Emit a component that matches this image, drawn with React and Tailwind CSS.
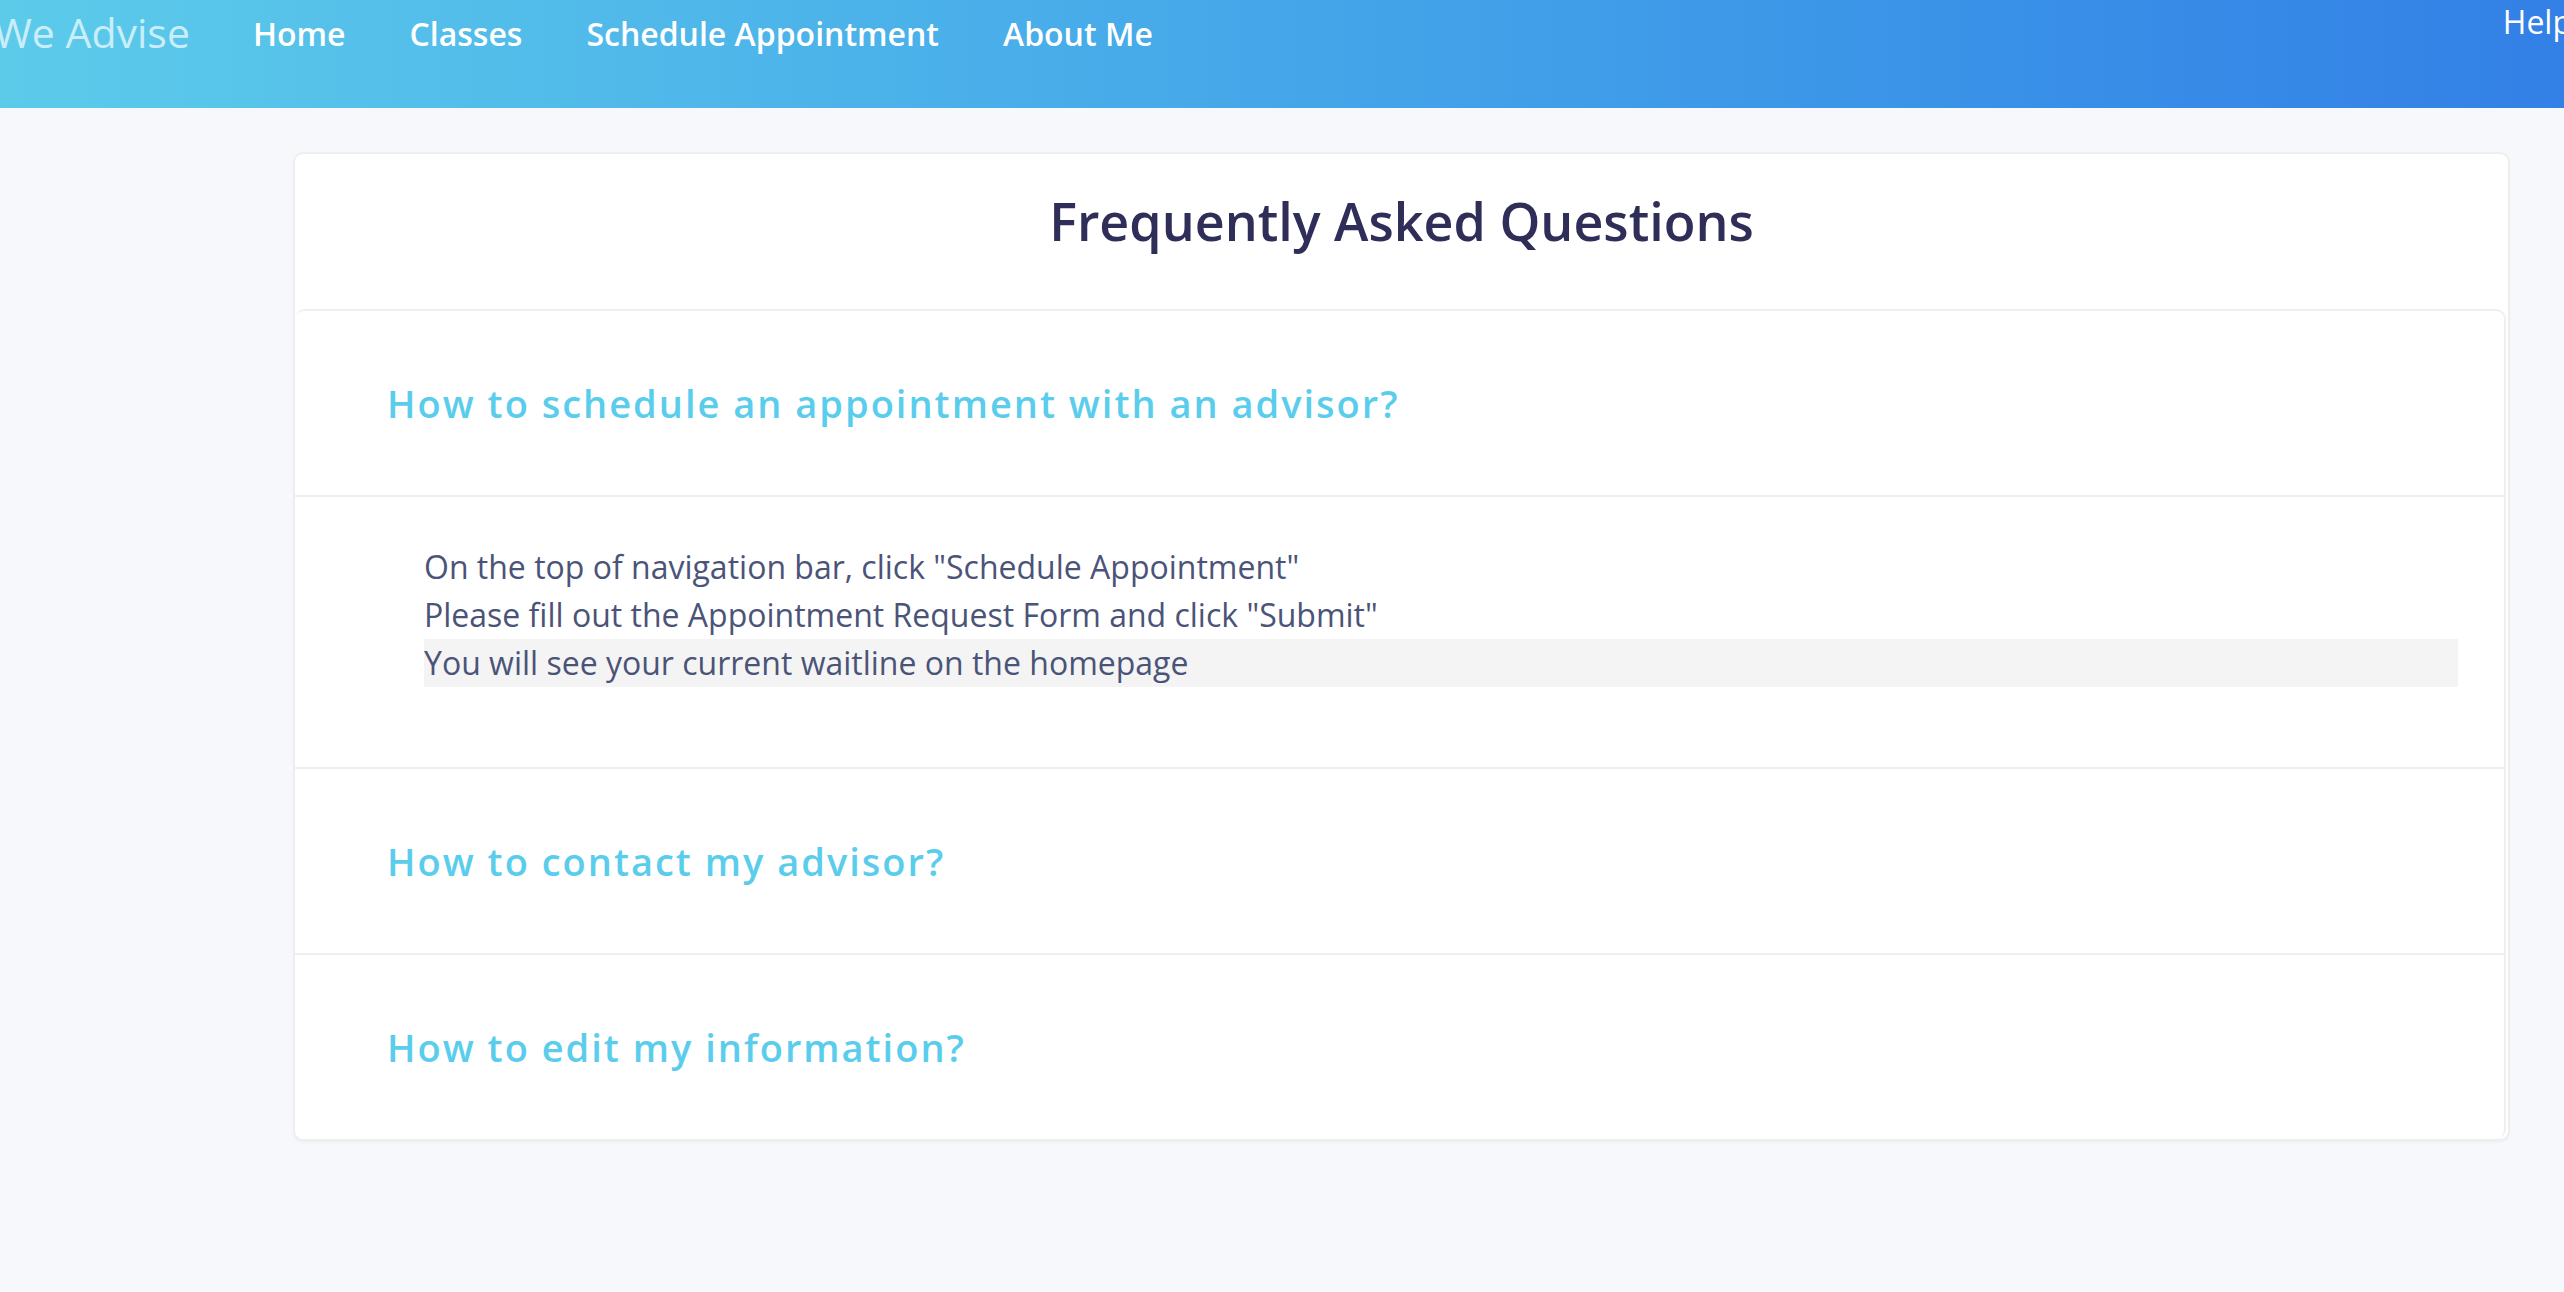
import React from 'react';

const navLinks = ['Home', 'Classes', 'Schedule Appointment', 'About Me'];

const faqs = [
  {
    q: 'How to schedule an appointment with an advisor?',
    open: true,
    steps: [
      'On the top of navigation bar, click "Schedule Appointment"',
      'Please fill out the Appointment Request Form and click "Submit"',
      'You will see your current waitline on the homepage',
    ],
  },
  { q: 'How to contact my advisor?' },
  { q: 'How to edit my information?' },
];

const Navbar = () => (
  <nav className="h-[108px] w-full overflow-hidden bg-gradient-to-r from-[#5ccbea] to-[#3380e6] flex items-start">
    <span className="ml-[-6px] mt-[8px] text-[41px] leading-[1.2] text-[#c9eef9]">We Advise</span>
    <ul className="flex gap-[64px] ml-[63px] mt-[12px]">
      {navLinks.map(link => (
        <li key={link} className="text-[32px] leading-[1.4] font-semibold text-white">{link}</li>
      ))}
    </ul>
    <span className="ml-auto mr-[-8px] mt-[0px] text-[32px] leading-[1.4] font-medium text-white">Help</span>
  </nav>
);

const FaqItem = ({ item, last }) => (
  <div className={last ? '' : 'border-b-2 border-[#efeff1]'}>
    <h3 className="pl-[92px] py-[62px] text-[38px] leading-[60px] font-semibold tracking-[2px] text-[#5bcdec]">{item.q}</h3>
    {item.open && (
      <div className="border-t-2 border-[#efeff1] pt-[46px] pb-[80px] pl-[129px] pr-[46px]">
        {item.steps.map((s, i) => (
          <p key={i} className={`text-[32px] leading-[48px] text-[#4b5478] ${i === 2 ? 'bg-[#f4f4f4]' : ''}`}>{s}</p>
        ))}
      </div>
    )}
  </div>
);

export default function App() {
  return (
    <div className="min-h-screen bg-[#f7f8fc] font-['Open_Sans',sans-serif]">
      <Navbar />
      <main className="pl-[293px] pr-[54px] pt-[44px]">
        <div className="bg-white border-2 border-[#eeeeee] rounded-[10px] shadow-[0_2px_2px_rgba(0,0,0,0.03)]">
          <div className="pt-[31px] pb-[51px] text-center">
            <h1 className="text-[52px] leading-[1.4] font-semibold text-[#2f2e58]">Frequently Asked Questions</h1>
          </div>
          <div className="border-t-2 border-r-2 border-[#efeff1] rounded-[10px] mr-[2px]">
            {faqs.map((f, i) => (
              <FaqItem key={f.q} item={f} last={i === faqs.length - 1} />
            ))}
          </div>
        </div>
      </main>
    </div>
  );
}
